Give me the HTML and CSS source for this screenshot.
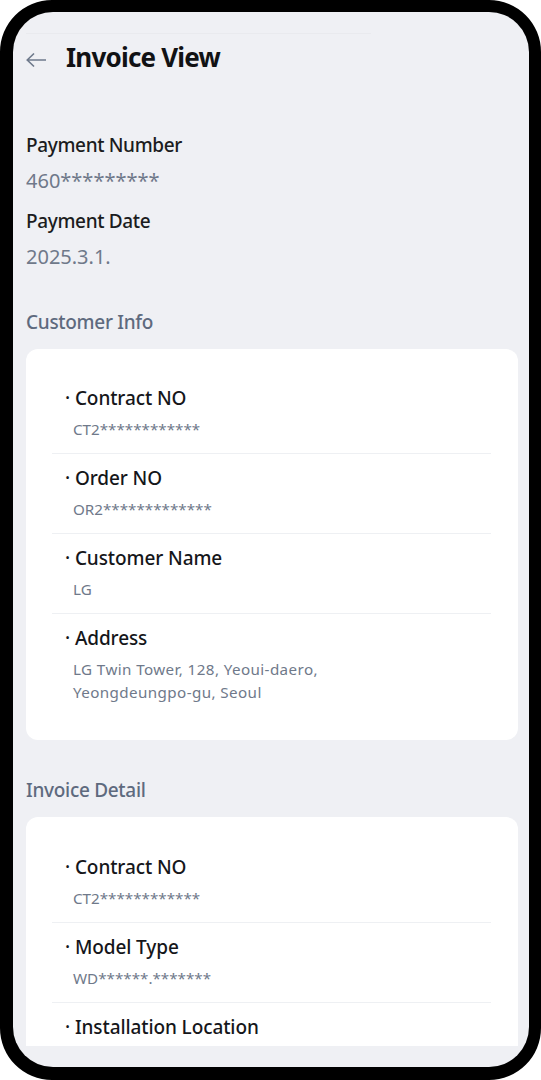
FILE: index.html
```html
<!DOCTYPE html>
<html lang="en">
<head>
<meta charset="utf-8">
<title>Invoice View</title>
<link rel="stylesheet" href="styles.css">
</head>
<body>
<div class="phone">
  <div class="screen">
    <div class="scroll">
      <div class="status-line"></div>
      <header class="header">
        <svg class="back" width="20" height="14" viewBox="0 0 20 14" aria-hidden="true">
          <path d="M19.5 7H1.2M7.5 1L1.2 7l6.3 6" fill="none" stroke="#6f7a8c" stroke-width="1.7" stroke-linecap="round" stroke-linejoin="round"/>
        </svg>
        <h1 class="title">Invoice View</h1>
      </header>

      <section class="summary">
        <div class="info-label">Payment Number</div>
        <div class="info-value">460*********</div>
        <div class="info-label next">Payment Date</div>
        <div class="info-value">2025.3.1.</div>
      </section>

      <h2 class="section-label first">Customer Info</h2>
      <div class="card">
        <div class="item">
          <div class="item-title">· Contract NO</div>
          <div class="item-value">CT2************</div>
        </div>
        <div class="item">
          <div class="item-title">· Order NO</div>
          <div class="item-value">OR2*************</div>
        </div>
        <div class="item">
          <div class="item-title">· Customer Name</div>
          <div class="item-value">LG</div>
        </div>
        <div class="item last">
          <div class="item-title">· Address</div>
          <div class="item-value address">LG Twin Tower, 128, Yeoui-daero,<br>Yeongdeungpo-gu, Seoul</div>
        </div>
      </div>

      <h2 class="section-label">Invoice Detail</h2>
      <div class="card tall">
        <div class="item">
          <div class="item-title">· Contract NO</div>
          <div class="item-value">CT2************</div>
        </div>
        <div class="item">
          <div class="item-title">· Model Type</div>
          <div class="item-value">WD******.*******</div>
        </div>
        <div class="item last">
          <div class="item-title">· Installation Location</div>
        </div>
      </div>
    </div>
  </div>
</div>
</body>
</html>
```

FILE: styles.css
```css
* { box-sizing: border-box; }

html, body {
  margin: 0;
  padding: 0;
  background: #ffffff;
}

body {
  font-family: "Noto Sans", "Liberation Sans", sans-serif;
}

.phone {
  width: 541px;
  height: 1080px;
  border: 12px solid #000;
  border-left-width: 13px;
  border-bottom-width: 13px;
  border-radius: 52px;
  background: #000;
}

.screen {
  height: 100%;
  background: #eff0f4;
  border-radius: 40px;
  overflow: hidden;
  display: flex;
  flex-direction: column;
  padding: 0 11px 21px 13px;
}

.scroll {
  flex: 1;
  min-height: 0;
  overflow: hidden;
}

.status-line {
  height: 1px;
  width: 358px;
  margin: 21px 0 0 -13px;
  background: #e9eaee;
}

.header {
  height: 46px;
  display: flex;
  align-items: center;
  gap: 20px;
}

.back {
  display: block;
  margin-top: 5px;
}

.title {
  margin: 0;
  font-size: 26px;
  line-height: 34px;
  font-weight: 700;
  color: #111214;
  letter-spacing: -0.8px;
}

.summary {
  margin-top: 52px;
}

.info-label {
  font-size: 19px;
  line-height: 26px;
  font-weight: 500;
  color: #1b1c20;
  letter-spacing: -0.35px;
}

.info-label.next {
  margin-top: 14px;
}

.info-value {
  margin-top: 10px;
  font-size: 20px;
  line-height: 26px;
  color: #6f798a;
}

.section-label {
  margin: 37px 0 0;
  font-size: 19px;
  line-height: 26px;
  font-weight: 500;
  color: #5e6a7e;
  letter-spacing: -0.3px;
}

.section-label.first {
  margin-top: 39px;
}

.card {
  margin-top: 14px;
  background: #ffffff;
  border-radius: 12px;
  padding: 25px 27px 23px 26px;
}

.card.tall {
  padding-top: 26px;
  padding-bottom: 60px;
}

.item {
  padding: 11px 0 12px;
  border-bottom: 1px solid #eef0f3;
}

.item.last {
  border-bottom: none;
  padding-bottom: 13px;
}

.item-title {
  padding-left: 13px;
  font-size: 19px;
  line-height: 26px;
  font-weight: 500;
  color: #15161a;
  letter-spacing: -0.1px;
}

.item-value {
  margin-top: 7px;
  padding-left: 21px;
  font-size: 15.2px;
  line-height: 23px;
  color: #6f798a;
}

.item-value.address {
  letter-spacing: 0.4px;
}
```
